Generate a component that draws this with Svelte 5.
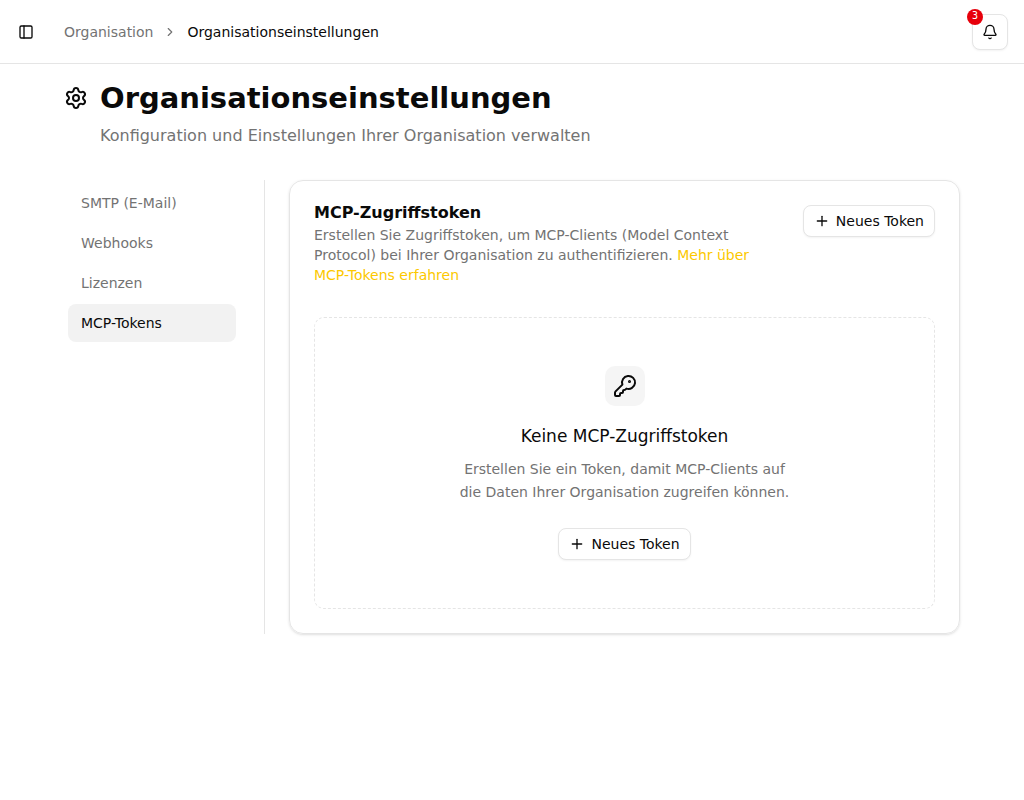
<script lang="ts">
  interface NavItem {
    id: string;
    label: string;
  }

  const navItems: NavItem[] = [
    { id: 'smtp', label: 'SMTP (E-Mail)' },
    { id: 'webhooks', label: 'Webhooks' },
    { id: 'licenses', label: 'Lizenzen' },
    { id: 'mcp-tokens', label: 'MCP-Tokens' },
  ];

  let active = $state('mcp-tokens');
  let notifications = $state(3);
</script>

{#snippet newTokenButton()}
  <button class="btn" type="button">
    <svg class="icon" viewBox="0 0 24 24" aria-hidden="true">
      <path d="M5 12h14" />
      <path d="M12 5v14" />
    </svg>
    Neues Token
  </button>
{/snippet}

<header class="topbar">
  <button class="sidebar-toggle" type="button" aria-label="Seitenleiste umschalten">
    <svg class="icon" viewBox="0 0 24 24" aria-hidden="true">
      <rect width="18" height="18" x="3" y="3" rx="2" />
      <path d="M9 3v18" />
    </svg>
  </button>
  <nav class="breadcrumb" aria-label="Breadcrumb">
    <a href="#organisation">Organisation</a>
    <svg class="icon chevron" viewBox="0 0 24 24" aria-hidden="true">
      <path d="m9 18 6-6-6-6" />
    </svg>
    <span aria-current="page">Organisationseinstellungen</span>
  </nav>
  <button class="bell" type="button" aria-label="Benachrichtigungen">
    <svg class="icon" viewBox="0 0 24 24" aria-hidden="true">
      <path d="M10.268 21a2 2 0 0 0 3.464 0" />
      <path d="M3.262 15.326A1 1 0 0 0 4 17h16a1 1 0 0 0 .74-1.673C19.41 13.956 18 12.499 18 8A6 6 0 0 0 6 8c0 4.499-1.411 5.956-2.738 7.326" />
    </svg>
    {#if notifications > 0}
      <span class="count">{notifications}</span>
    {/if}
  </button>
</header>

<main>
  <div class="page-head">
    <svg class="icon large" viewBox="0 0 24 24" aria-hidden="true">
      <path d="M9.671 4.136a2.34 2.34 0 0 1 4.659 0 2.34 2.34 0 0 0 3.319 1.915 2.34 2.34 0 0 1 2.33 4.033 2.34 2.34 0 0 0 0 3.831 2.34 2.34 0 0 1-2.33 4.033 2.34 2.34 0 0 0-3.319 1.915 2.34 2.34 0 0 1-4.659 0 2.34 2.34 0 0 0-3.32-1.915 2.34 2.34 0 0 1-2.33-4.033 2.34 2.34 0 0 0 0-3.831A2.34 2.34 0 0 1 6.35 6.051a2.34 2.34 0 0 0 3.319-1.915" />
      <circle cx="12" cy="12" r="3" />
    </svg>
    <h1>Organisationseinstellungen</h1>
    <p>Konfiguration und Einstellungen Ihrer Organisation verwalten</p>
  </div>

  <div class="content">
    <nav class="side" aria-label="Einstellungen">
      {#each navItems as item (item.id)}
        <a
          href="#{item.id}"
          class:active={active === item.id}
          aria-current={active === item.id ? 'page' : undefined}
          onclick={() => (active = item.id)}
        >{item.label}</a>
      {/each}
    </nav>

    <section class="card">
      <div class="card-head">
        <div class="card-text">
          <h2>MCP-Zugriffstoken</h2>
          <p>
            Erstellen Sie Zugriffstoken, um MCP-Clients (Model Context Protocol) bei Ihrer
            Organisation zu authentifizieren. <a href="#mcp-docs">Mehr über MCP-Tokens erfahren</a>
          </p>
        </div>
        {@render newTokenButton()}
      </div>

      <div class="empty">
        <div class="empty-icon">
          <svg class="icon large" viewBox="0 0 24 24" aria-hidden="true">
            <path d="M2.586 17.414A2 2 0 0 0 2 18.828V21a1 1 0 0 0 1 1h3a1 1 0 0 0 1-1v-1a1 1 0 0 1 1-1h1a1 1 0 0 0 1-1v-1a1 1 0 0 1 1-1h.172a2 2 0 0 0 1.414-.586l.814-.814a6.5 6.5 0 1 0-4-4z" />
            <circle cx="16.5" cy="7.5" r=".5" fill="currentColor" />
          </svg>
        </div>
        <h3>Keine MCP-Zugriffstoken</h3>
        <p>Erstellen Sie ein Token, damit MCP-Clients auf die Daten Ihrer Organisation zugreifen können.</p>
        {@render newTokenButton()}
      </div>
    </section>
  </div>
</main>

<style>
  :global(body) {
    background: #fff;
    color: #0a0a0a;
    font-family: 'DejaVu Sans', sans-serif;
    font-size: 14px;
    line-height: 20px;
  }
  h1, h2, h3, p { margin: 0; }
  a { color: inherit; text-decoration: none; }
  button { font: inherit; color: inherit; cursor: pointer; }

  .icon {
    width: 16px;
    height: 16px;
    flex-shrink: 0;
    fill: none;
    stroke: currentColor;
    stroke-width: 2;
    stroke-linecap: round;
    stroke-linejoin: round;
  }
  .icon.large { width: 24px; height: 24px; }

  .topbar {
    display: flex;
    align-items: center;
    gap: 24px;
    height: 64px;
    padding: 0 16px 0 12px;
    box-sizing: border-box;
    border-bottom: 1px solid #e5e5e5;
  }
  .sidebar-toggle {
    display: grid;
    place-items: center;
    width: 28px;
    height: 28px;
    padding: 0;
    border: 0;
    border-radius: 8px;
    background: none;
  }
  .breadcrumb { display: flex; align-items: center; gap: 10px; flex: 1; }
  .breadcrumb a { color: #737373; }
  .chevron { width: 14px; height: 14px; color: #737373; }

  .btn, .bell {
    display: inline-flex;
    align-items: center;
    justify-content: center;
    box-sizing: border-box;
    border: 1px solid #e5e5e5;
    border-radius: 8px;
    background: #fff;
    box-shadow: 0 1px 2px rgb(0 0 0 / 5%);
  }
  .btn {
    flex-shrink: 0;
    gap: 6px;
    height: 32px;
    padding: 0 10px;
    white-space: nowrap;
  }
  .bell { position: relative; width: 36px; height: 36px; padding: 0; }
  .count {
    position: absolute;
    top: -6px;
    left: -6px;
    width: 16px;
    height: 16px;
    border-radius: 50%;
    background: #e7000b;
    color: #fff;
    font-family: 'DejaVu Sans Mono', monospace;
    font-size: 10px;
    line-height: 14px;
    text-align: center;
  }

  main { padding: 16px 64px; }
  .page-head {
    display: grid;
    grid-template-columns: 24px 1fr;
    align-items: center;
    gap: 8px 12px;
    margin-bottom: 32px;
  }
  h1 { font-size: 29px; line-height: 36px; font-weight: 700; }
  .page-head p { grid-column: 2; font-size: 16px; line-height: 24px; color: #737373; }

  .content { display: flex; gap: 24px; }
  .side {
    display: flex;
    flex-direction: column;
    gap: 2px;
    flex: 0 0 168px;
    padding: 4px 28px 4px 4px;
    border-right: 1px solid #e5e5e5;
  }
  .side a { padding: 9px 13px; border-radius: 8px; color: #737373; }
  .side a.active { background: #f2f2f2; color: #0a0a0a; }

  .card {
    flex: 1;
    min-width: 0;
    padding: 24px;
    border: 1px solid #e5e5e5;
    border-radius: 14px;
    box-shadow: 0 1px 3px rgb(0 0 0 / 10%), 0 1px 2px -1px rgb(0 0 0 / 10%);
  }
  .card-head {
    display: flex;
    align-items: flex-start;
    justify-content: space-between;
    gap: 16px;
    margin-bottom: 32px;
  }
  .card-text { max-width: 448px; }
  h2 { margin-bottom: 4px; font-size: 16px; line-height: 16px; font-weight: 700; }
  .card-text p { color: #737373; }
  .card-text a { color: #fcc800; }

  .empty {
    display: flex;
    flex-direction: column;
    align-items: center;
    padding: 48px;
    border: 1px dashed #e5e5e5;
    border-radius: 10px;
    text-align: center;
  }
  .empty-icon {
    display: grid;
    place-items: center;
    width: 40px;
    height: 40px;
    margin-bottom: 16px;
    border-radius: 10px;
    background: #f5f5f5;
  }
  h3 { margin-bottom: 8px; font-size: 17px; line-height: 28px; font-weight: 400; }
  .empty p { max-width: 336px; margin-bottom: 24px; line-height: 23px; color: #737373; }
</style>
